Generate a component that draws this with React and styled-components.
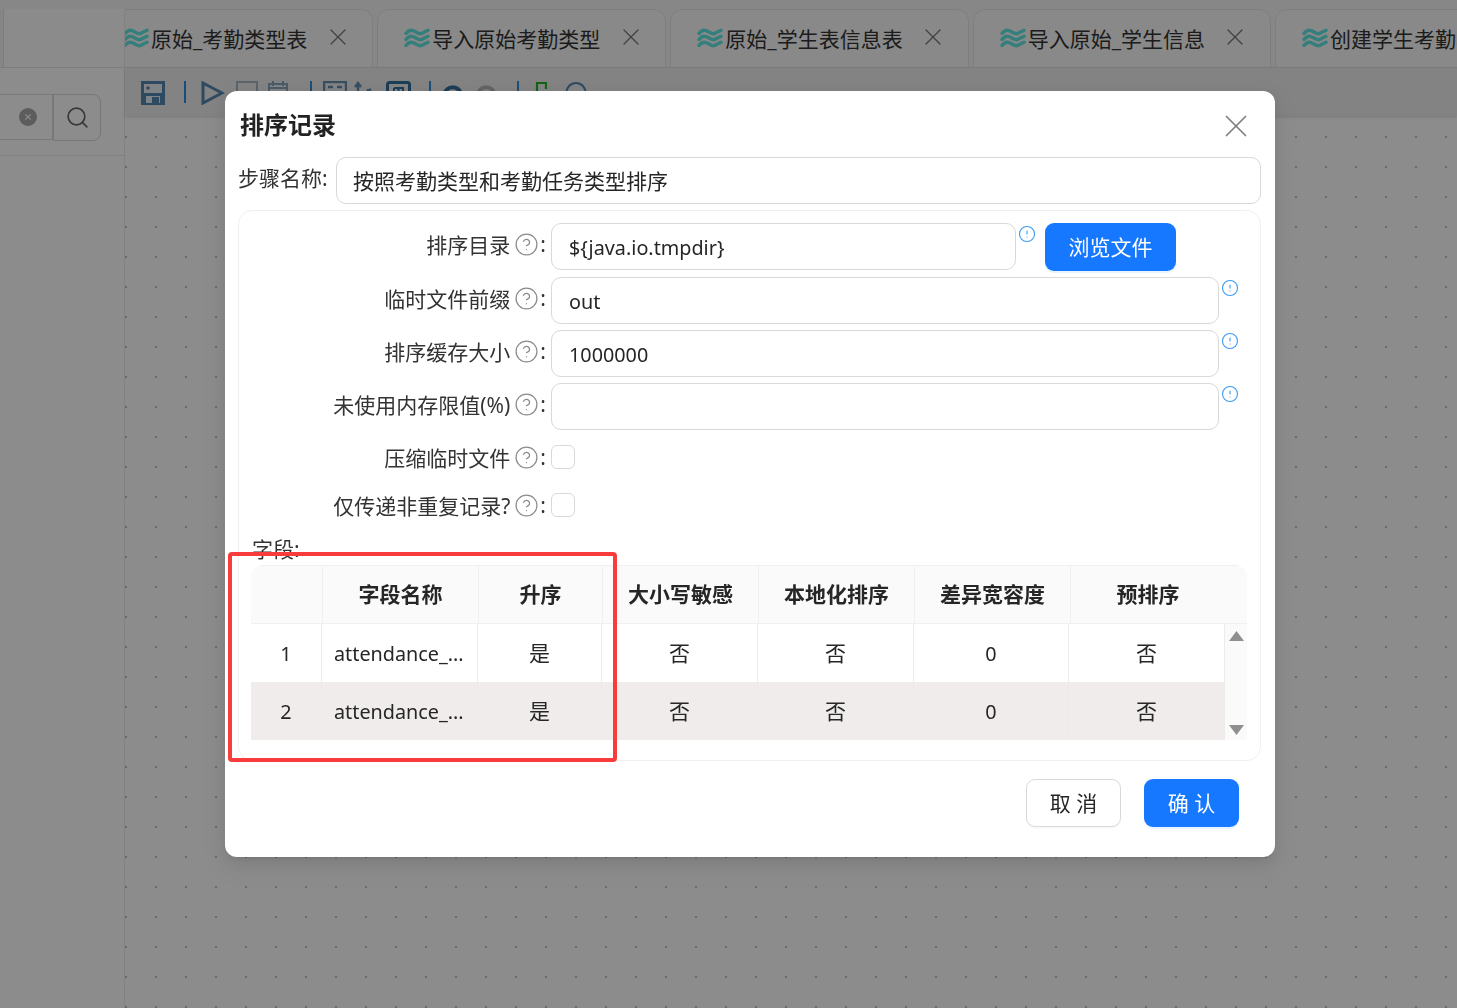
import styled, { createGlobalStyle } from "styled-components";
import { CircleHelp, CircleAlert, Search, X } from "lucide-react";

const GlobalStyle = createGlobalStyle`
  html, body {
    margin: 0;
    padding: 0;
    height: 100%;
    overflow: hidden;
    background: #fff;
    font-family: "Noto Sans", "Noto Sans CJK SC", sans-serif;
    color: #262626;
  }
  * { box-sizing: border-box; }
`;

const Page = styled.div`
  width: 1457px;
  height: 1008px;
  display: flex;
  overflow: hidden;
  padding-top: 9px;
  background: #f6f6f6;
`;

const Sidebar = styled.aside`
  width: 125px;
  flex: none;
  background: #fff;
  border-right: 1px solid #ececec;
  display: flex;
  flex-direction: column;
`;

const SideTabStrip = styled.div`
  height: 59px;
  padding-left: 3px;
  background: #f5f5f5;
  border-bottom: 1px solid #e4e4e4;
`;

const SideTab = styled.div`
  height: 100%;
  border-left: 1px solid #e4e4e4;
  background: #fdfdfd;
`;

const SearchBar = styled.div`
  height: 88px;
  padding-top: 26px;
  display: flex;
  align-items: flex-start;
  border-bottom: 1px solid #e9e9e9;
`;

const SearchInput = styled.div`
  width: 53px;
  height: 46px;
  border: 1px solid #dcdcdc;
  border-left: none;
  display: flex;
  align-items: center;
  justify-content: flex-end;
  padding-right: 15px;
`;

const SearchButton = styled.div`
  width: 48px;
  height: 47px;
  margin-left: 0;
  border: 1px solid #d9d9d9;
  border-radius: 0 8px 8px 0;
  display: flex;
  align-items: center;
  justify-content: center;
  color: #666;
`;

const Main = styled.main`
  flex: 1;
  min-width: 0;
  display: flex;
  flex-direction: column;
`;

const TabStrip = styled.div`
  height: 59px;
  display: flex;
  gap: 4px;
  overflow: hidden;
  border-bottom: 1px solid #e4e4e4;
`;

const Tab = styled.div`
  flex: none;
  height: 59px;
  display: flex;
  align-items: center;
  padding: 0 20.5px 2px ${(p) => (p.$clipped ? 0 : 26)}px;
  background: #fafafa;
  border: 1px solid #e6e6e6;
  border-left-width: ${(p) => (p.$clipped ? 0 : 1)}px;
  border-radius: ${(p) => (p.$clipped ? "0 12px 0 0" : "12px 12px 0 0")};
  font-size: 21px;
  color: #333;
  white-space: nowrap;
`;

const TabWave = styled.svg`
  flex: none;
  margin-left: ${(p) => (p.$clipped ? -2 : 0)}px;
`;

const TabLabel = styled.span`
  margin-left: 2px;
`;

const TabClose = styled(X)`
  flex: none;
  margin-left: 16.5px;
  margin-top: -2px;
  color: #777;
`;

const Toolbar = styled.div`
  height: 48px;
  display: flex;
  align-items: flex-start;
  padding: 13px 0 0 16px;
  background: #eeeeee;
  box-shadow: 0 1px 3px rgba(0, 0, 0, 0.15);
  position: relative;
`;

const ToolIcon = styled.svg`
  flex: none;
  margin-left: ${(p) => p.$ml || 0}px;
`;

const ToolSep = styled.div`
  flex: none;
  width: 2px;
  height: 22px;
  margin-left: ${(p) => p.$ml}px;
  background: #2b8fe0;
`;

const Canvas = styled.div`
  flex: 1;
  background-color: #fff;
  background-image: radial-gradient(circle at 1px 1px, #a0a0a0 0.6px, transparent 0.9px);
  background-size: 30px 30px;
  background-position: 0 20px;
`;

const Overlay = styled.div`
  position: fixed;
  inset: 0;
  background: rgba(0, 0, 0, 0.45);
`;

const Modal = styled.div`
  position: fixed;
  left: 225px;
  top: 91px;
  width: 1050px;
  height: 766px;
  background: #fff;
  border-radius: 12px;
  box-shadow: 0 6px 16px rgba(0, 0, 0, 0.08), 0 3px 6px -4px rgba(0, 0, 0, 0.12), 0 9px 28px 8px rgba(0, 0, 0, 0.05);
  padding: 0 14px 0 13px;
`;

const ModalHeader = styled.div`
  height: 66px;
  display: flex;
  align-items: center;
  justify-content: space-between;
  padding: 2px 6px 0 2px;
`;

const ModalTitle = styled.h2`
  margin: 0;
  font-size: 24px;
  line-height: 32px;
  font-weight: 700;
  color: #222;
`;

const CloseIcon = styled(X)`
  color: #7f7f7f;
  margin-top: 2px;
`;

const StepRow = styled.div`
  display: flex;
  align-items: flex-start;
  margin-bottom: 6px;
`;

const StepLabel = styled.label`
  width: 98px;
  flex: none;
  font-size: 21px;
  line-height: 43px;
  color: #333;
  white-space: nowrap;
`;

const TextBox = styled.div`
  flex: ${(p) => (p.$width ? "none" : 1)};
  width: ${(p) => (p.$width ? `${p.$width}px` : "auto")};
  height: 47px;
  margin-left: ${(p) => p.$ml || 0}px;
  border: 1px solid #d9d9d9;
  border-radius: 10px;
  padding: 0 16px 0 ${(p) => (p.$latin ? 17 : 16)}px;
  font-size: ${(p) => (p.$latin ? "19.8px" : "21px")};
  line-height: 47px;
  color: #262626;
  white-space: nowrap;
`;

const Panel = styled.section`
  height: 551px;
  border: 1px solid #f0f0f0;
  border-radius: 14px;
  padding: 12px 13px 0 12px;
`;

const FieldRow = styled.div`
  display: flex;
  align-items: flex-start;
  margin-bottom: 6px;
  min-height: 47px;
`;

const CheckGroup = styled.div`
  margin-top: -3px;
`;

const CheckRow = styled.div`
  display: flex;
  align-items: center;
  height: 48px;
`;

const FieldLabel = styled.label`
  width: 295px;
  flex: none;
  display: flex;
  align-items: center;
  justify-content: flex-end;
  height: ${(p) => (p.$check ? "48px" : "42px")};
  font-size: 21px;
  color: #333;
  white-space: nowrap;
`;

const HelpIcon = styled(CircleHelp)`
  margin: 0 1px 0 4px;
  color: #8c8c8c;
  flex: none;
`;

const InfoIcon = styled(CircleAlert)`
  flex: none;
  margin: 2px 0 0 2px;
  color: #3d9bf5;
`;

const Checkbox = styled.span`
  display: block;
  width: 24px;
  height: 24px;
  margin: -1px 0 0 5px;
  border: 1px solid #d9d9d9;
  border-radius: 6px;
  background: #fff;
`;

const PrimaryButton = styled.button`
  flex: none;
  width: ${(p) => p.$width}px;
  height: 48px;
  margin-left: ${(p) => p.$ml || 0}px;
  padding: 0 0 2px;
  border: none;
  border-radius: 9px;
  background: #1677ff;
  color: #fff;
  font: inherit;
  font-size: 21px;
  box-shadow: 0 2px 0 rgba(5, 145, 255, 0.1);
`;

const DefaultButton = styled.button`
  flex: none;
  width: 95px;
  height: 48px;
  padding: 0 0 2px;
  border: 1px solid #d9d9d9;
  border-radius: 9px;
  background: #fff;
  color: #262626;
  font: inherit;
  font-size: 21px;
  box-shadow: 0 2px 0 rgba(0, 0, 0, 0.02);
`;

const FieldsTitle = styled.div`
  height: 31px;
  margin-top: 5px;
  padding-left: 1px;
  font-size: 21px;
  line-height: 30px;
  color: #333;
`;

const FieldsTable = styled.div`
  width: 996px;
  border-radius: 12px 12px 0 0;
  overflow: hidden;
`;

const HeadRow = styled.div`
  display: grid;
  grid-template-columns: 72px 156px 124px 156px 156px 156px 176px;
  height: 59px;
  background: #fafafa;
  border-top: 1px solid #f0f0f0;
  border-bottom: 1px solid #f0f0f0;
`;

const HeadCell = styled.div`
  display: flex;
  align-items: center;
  justify-content: center;
  padding-bottom: 3px;
  font-size: 21px;
  font-weight: 700;
  color: #262626;
  border-right: 1px solid #f0f0f0;
  &:last-child {
    border-right: none;
    padding-right: 22px;
  }
`;

const BodyWrap = styled.div`
  display: flex;
`;

const BodyRows = styled.div`
  width: 974px;
  flex: none;
`;

const BodyRow = styled.div`
  display: grid;
  grid-template-columns: 71px 156px 124px 156px 156px 155px 156px;
  height: 58px;
  background: ${(p) => (p.$striped ? "#f0ecec" : "#fff")};
`;

const BodyCell = styled.div`
  display: flex;
  align-items: center;
  justify-content: ${(p) => (p.$left ? "flex-start" : "center")};
  padding-left: ${(p) => (p.$left ? 12 : 0)}px;
  padding-bottom: ${(p) => (p.$latin ? 0 : 2)}px;
  font-size: ${(p) => (p.$latin ? "19.8px" : "21px")};
  color: #262626;
  border-right: 1px solid #eeeaea;
  white-space: nowrap;
`;

const ScrollTrack = styled.div`
  width: 22px;
  flex: none;
  display: flex;
  flex-direction: column;
  justify-content: space-between;
  align-items: center;
  padding: 7px 0 5px;
  background: #fafafa;
`;

const Footer = styled.div`
  display: flex;
  justify-content: flex-end;
  gap: 23px;
  margin-top: 18px;
  padding-right: 22px;
`;

const RedMark = styled.div`
  position: absolute;
  left: 3px;
  top: 461px;
  width: 389px;
  height: 210px;
  border: 4px solid #f83c3c;
  border-radius: 4px;
  pointer-events: none;
`;

const tabs = [
  { label: "原始_考勤类型表", clipped: true },
  { label: "导入原始考勤类型" },
  { label: "原始_学生表信息表" },
  { label: "导入原始_学生信息" },
  { label: "创建学生考勤表" },
];

const fields = [
  { label: "排序目录", value: "${java.io.tmpdir}", browse: true },
  { label: "临时文件前缀", value: "out" },
  { label: "排序缓存大小", value: "1000000" },
  { label: "未使用内存限值(%)", value: "" },
];

const checks = ["压缩临时文件", "仅传递非重复记录?"];

const columns = ["", "字段名称", "升序", "大小写敏感", "本地化排序", "差异宽容度", "预排序"];

const rows = [
  ["1", "attendance_...", "是", "否", "否", "0", "否"],
  ["2", "attendance_...", "是", "否", "否", "0", "否"],
];

const WaveIcon = ({ clipped }) => (
  <TabWave $clipped={clipped} width="26" height="20" viewBox="0 0 26 20" fill="none" stroke="#5fe6e0" strokeWidth="3.4" strokeLinecap="round">
    <path d="M2 5.500c3-4 6-4 9-2s5 3 7 1.800 4-2.300 6-3" />
    <path d="M2 11.500c3-4 6-4 9-2s5 3 7 1.800 4-2.300 6-3" />
    <path d="M2 17.500c3-4 6-4 9-2s5 3 7 1.800 4-2.300 6-3" />
  </TabWave>
);

const ClearIcon = () => (
  <svg width="18" height="18" viewBox="0 0 18 18">
    <circle cx="9" cy="9" r="9" fill="#a8a8a8" />
    <path d="M6.300 6.300l5.400 5.400M11.700 6.300l-5.400 5.400" stroke="#fff" strokeWidth="1.200" />
  </svg>
);

const ToolbarIcons = () => (
  <>
    <ToolIcon width="24" height="24" viewBox="0 0 24 24">
      <path d="M0 0h24v24H0z" fill="#5587b0" />
      <path d="M3 3h18v9H3z" fill="#e8eef3" />
      <circle cx="7" cy="7" r="1.800" fill="#5587b0" />
      <path d="M5 15h14v7H5z" fill="#e8eef3" />
      <path d="M11 16h7v6h-7z" fill="#5587b0" />
    </ToolIcon>
    <ToolSep $ml={19} />
    <ToolIcon $ml={15} width="24" height="24" viewBox="0 0 24 24" fill="none" stroke="#5587b0" strokeWidth="3">
      <path d="M2 2l19 10L2 22z" />
    </ToolIcon>
    <ToolIcon $ml={11} width="22" height="22" viewBox="0 0 22 22" fill="none" stroke="#a8b4bf" strokeWidth="2">
      <rect x="1" y="1" width="20" height="20" />
    </ToolIcon>
    <ToolIcon $ml={9} width="22" height="22" viewBox="0 0 22 22" fill="none" stroke="#8aa6bf" strokeWidth="2">
      <rect x="2" y="3" width="18" height="18" />
      <path d="M6 0v5M16 0v5M2 7h18" />
    </ToolIcon>
    <ToolSep $ml={21} />
    <ToolIcon $ml={11} width="24" height="22" viewBox="0 0 24 22" fill="none" stroke="#6490b5" strokeWidth="2.400">
      <rect x="1" y="1" width="22" height="12" />
      <path d="M5 6h5M14 6h5" />
    </ToolIcon>
    <ToolIcon $ml={6} width="20" height="22" viewBox="0 0 20 22" fill="none" stroke="#6490b5" strokeWidth="2.400">
      <path d="M5 22V2M2 6l3-4 3 4M15 22V8M12 12l6-4" />
    </ToolIcon>
    <ToolIcon $ml={13} width="25" height="22" viewBox="0 0 25 22" fill="none" stroke="#34709e" strokeWidth="3">
      <rect x="1.500" y="1.500" width="22" height="20" rx="2" />
      <path d="M8 7h9v8M12.500 7v8M8 7v8" strokeWidth="2" />
    </ToolIcon>
    <ToolSep $ml={18} />
    <ToolIcon $ml={12} width="20" height="22" viewBox="0 0 20 22" fill="none" stroke="#34709e" strokeWidth="4">
      <path d="M2 12c2-7 12-8 16 0" />
    </ToolIcon>
    <ToolIcon $ml={13} width="20" height="22" viewBox="0 0 20 22" fill="none" stroke="#b5b5b5" strokeWidth="4">
      <path d="M2 12c4-8 14-7 16 0" />
    </ToolIcon>
    <ToolSep $ml={21} />
    <ToolIcon $ml={16} width="12" height="22" viewBox="0 0 12 22" fill="none" stroke="#22b522" strokeWidth="2.200">
      <path d="M11 2H2v20M1 2h10v6" />
    </ToolIcon>
    <ToolIcon $ml={17} width="24" height="22" viewBox="0 0 24 22" fill="none" stroke="#5587b0" strokeWidth="2">
      <path d="M2 14c0-16 20-16 20 0" />
    </ToolIcon>
  </>
);

const App = () => {
  return (
    <>
      <GlobalStyle />
      <Page>
        <Sidebar>
          <SideTabStrip>
            <SideTab />
          </SideTabStrip>
          <SearchBar>
            <SearchInput>
              <ClearIcon />
            </SearchInput>
            <SearchButton>
              <Search size={25} strokeWidth={1.6} />
            </SearchButton>
          </SearchBar>
        </Sidebar>
        <Main>
          <TabStrip>
            {tabs.map((tab) => (
              <Tab key={tab.label} $clipped={tab.clipped}>
                <WaveIcon clipped={tab.clipped} />
                <TabLabel>{tab.label}</TabLabel>
                <TabClose size={28} strokeWidth={1.1} />
              </Tab>
            ))}
          </TabStrip>
          <Toolbar>
            <ToolbarIcons />
          </Toolbar>
          <Canvas />
        </Main>
      </Page>

      <Overlay />

      <Modal>
        <ModalHeader>
          <ModalTitle>排序记录</ModalTitle>
          <CloseIcon size={38} strokeWidth={1.1} />
        </ModalHeader>
        <StepRow>
          <StepLabel>步骤名称:</StepLabel>
          <TextBox>按照考勤类型和考勤任务类型排序</TextBox>
        </StepRow>
        <Panel>
          {fields.map((field) => (
            <FieldRow key={field.label}>
              <FieldLabel>
                {field.label}
                <HelpIcon size={25} strokeWidth={1.2} />:
              </FieldLabel>
              <TextBox $latin $ml={5} $width={field.browse ? 465 : 668}>
                {field.value}
              </TextBox>
              <InfoIcon size={18} strokeWidth={1.5} />
              {field.browse && <PrimaryButton $width={131} $ml={9}>浏览文件</PrimaryButton>}
            </FieldRow>
          ))}
          <CheckGroup>
            {checks.map((label) => (
              <CheckRow key={label}>
                <FieldLabel $check>
                  {label}
                  <HelpIcon size={25} strokeWidth={1.2} />:
                </FieldLabel>
                <Checkbox />
              </CheckRow>
            ))}
          </CheckGroup>
          <FieldsTitle>字段:</FieldsTitle>
          <FieldsTable>
            <HeadRow>
              {columns.map((col, index) => (
                <HeadCell key={index}>{col}</HeadCell>
              ))}
            </HeadRow>
            <BodyWrap>
              <BodyRows>
                {rows.map((row, rowIndex) => (
                  <BodyRow key={rowIndex} $striped={rowIndex % 2 === 1}>
                    {row.map((cell, index) => (
                      <BodyCell key={index} $left={index === 1} $latin={/^[\x00-\x7f]+$/.test(cell)}>
                        {cell}
                      </BodyCell>
                    ))}
                  </BodyRow>
                ))}
              </BodyRows>
              <ScrollTrack>
                <svg width="15" height="10" viewBox="0 0 15 10">
                  <path d="M7.500 0L15 10H0z" fill="#8f8f8f" />
                </svg>
                <svg width="15" height="10" viewBox="0 0 15 10">
                  <path d="M0 0h15L7.500 10z" fill="#8f8f8f" />
                </svg>
              </ScrollTrack>
            </BodyWrap>
          </FieldsTable>
        </Panel>
        <Footer>
          <DefaultButton>取 消</DefaultButton>
          <PrimaryButton $width={95}>确 认</PrimaryButton>
        </Footer>
        <RedMark />
      </Modal>
    </>
  );
};

export default App;
